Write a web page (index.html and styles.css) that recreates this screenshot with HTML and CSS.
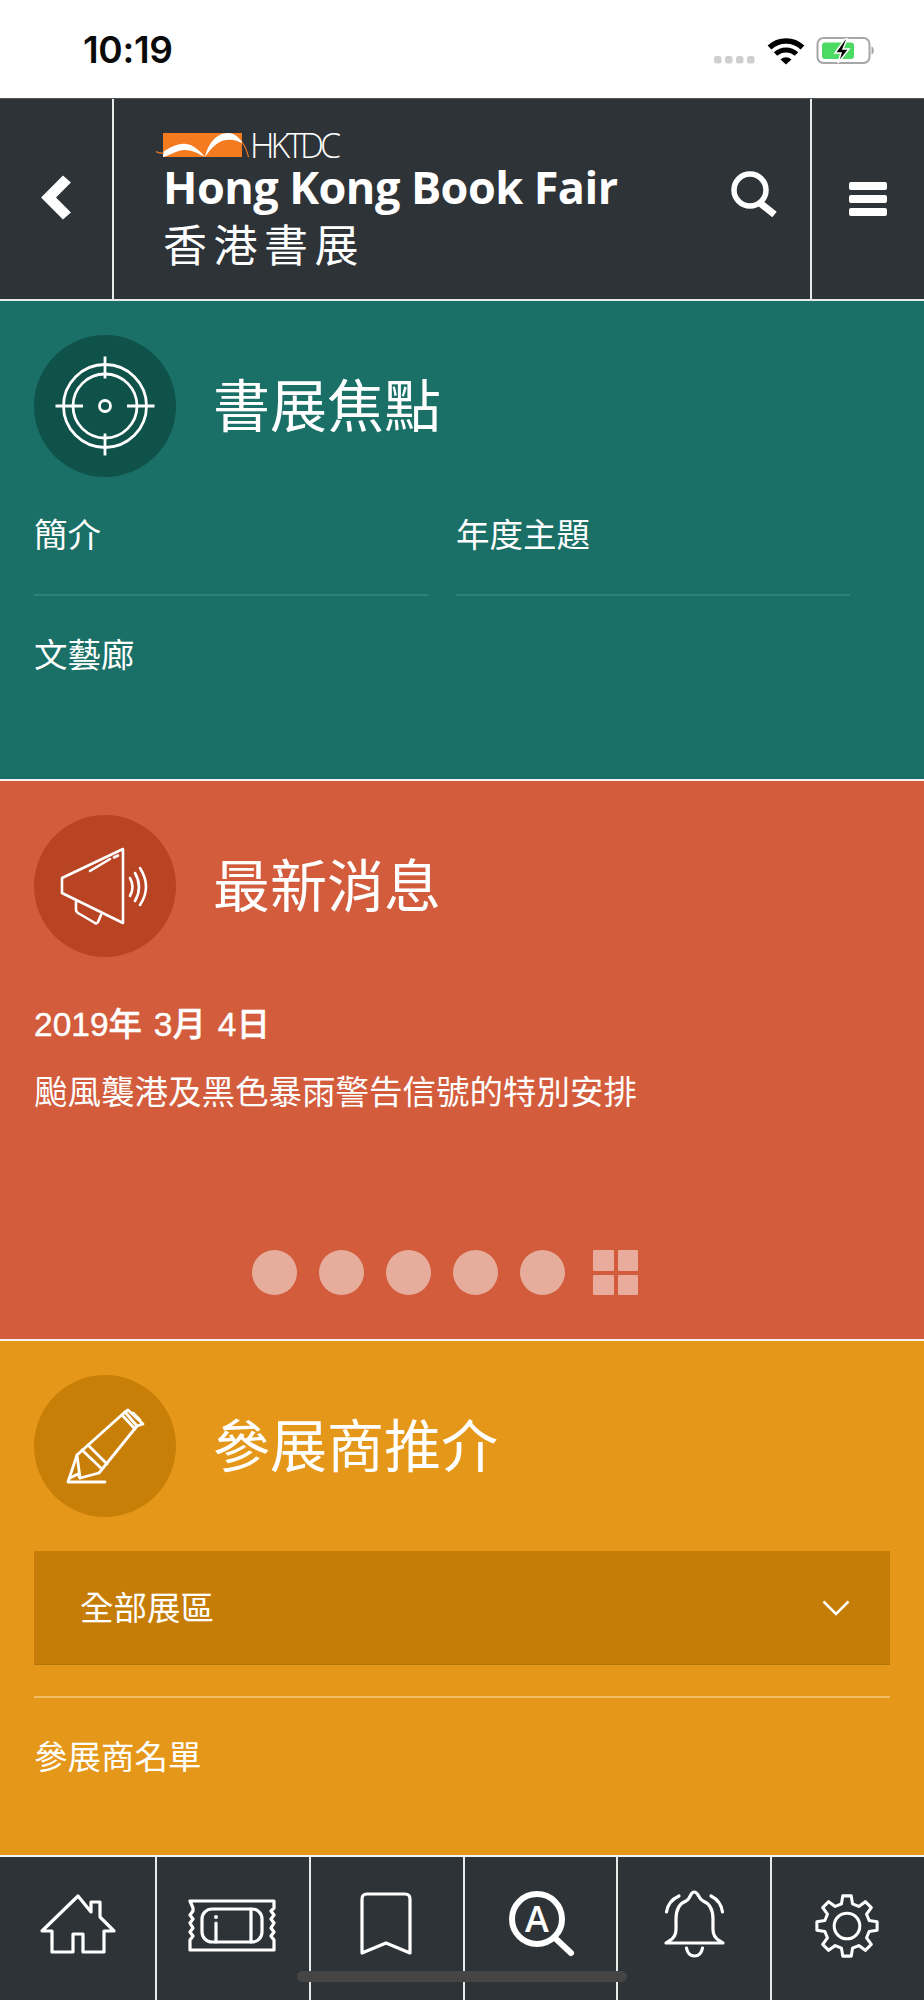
FILE: index.html
```html
<!DOCTYPE html>
<html lang="zh-Hant">
<head>
<meta charset="utf-8">
<title>香港書展</title>
<link rel="stylesheet" href="styles.css">
</head>
<body>
<div class="page">
  <div class="statusbar">
    <span class="time">10:19</span>
    <svg class="status-icons" viewBox="0 0 170 40" aria-hidden="true">
      <g fill="#cfcfcf"><rect x="2" y="19" width="7.5" height="7.5" rx="2.5"/><rect x="13" y="19" width="7.5" height="7.5" rx="2.5"/><rect x="24" y="19" width="7.5" height="7.5" rx="2.5"/><rect x="35" y="19" width="7.5" height="7.5" rx="2.5"/></g>
      <g fill="none" stroke="#000">
        <path d="M57.5 10.5 A24 24 0 0 1 90.5 10.5" stroke-width="5.5"/>
        <path d="M63.5 17 A15.5 15.5 0 0 1 84.5 17" stroke-width="5"/>
      </g>
      <path d="M68.5 22.5 A8 8 0 0 1 79.5 22.5 L74 27.5Z" fill="#000"/>
      <rect x="105.5" y="1" width="52" height="25" rx="6" fill="none" stroke="#a6a6a6" stroke-width="2"/>
      <path d="M159.5 9.5 C162.5 10 162.5 17 159.5 17.5Z" fill="#a6a6a6"/>
      <rect x="110" y="5.5" width="32" height="16.5" rx="3" fill="#4cd964"/>
      <path d="M133 2 L123 16 L129 16 L126 26 L137 12 L131 12 L135 2Z" fill="#000" stroke="#fff" stroke-width="1.5"/>
    </svg>
  </div>

  <header class="topbar">
    <div class="top-back">
      <svg class="fill-cell" viewBox="0 0 112 201" aria-hidden="true"><polygon points="41,99 63,77 71,84 56,99 71,114 63,121" fill="#fff"/></svg>
    </div>
    <div class="brand">
      <div class="brand-logo">
        <svg class="logo-mark" viewBox="0 0 94 30" aria-hidden="true">
          <rect x="7" y="3" width="79" height="24" fill="#f47b20"/>
          <path d="M7 22 C15 17 22 13 30 14 C38 15 44 21 49 27 C43 24 37 20 29 20 C21 20 15 25 7 27Z" fill="#fff"/>
          <path d="M49 27 C52 14 60 3 72 3 C78 3 84 8 86 12 L86 13 C80 10 76 9 70 10 C62 11 56 17 49 27Z" fill="#fff"/>
          <path d="M86 12 C89 16 91 21 92.500 27" stroke="#f47b20" stroke-width="1.200" fill="none"/>
          <path d="M0 21.500 C3 23 5 23.500 8 23" stroke="#f47b20" stroke-width="1.200" fill="none"/>
        </svg>
        <span class="logo-text">HKTDC</span>
      </div>
      <div class="brand-en">Hong Kong Book Fair</div>
      <div class="brand-zh">香港書展</div>
    </div>
    <div class="top-search">
      <svg class="search-icon" viewBox="0 0 50 50" aria-hidden="true"><circle cx="20" cy="20" r="16" fill="none" stroke="#fff" stroke-width="5.500"/><path d="M30 33 L44.500 44.500" stroke="#fff" stroke-width="7"/></svg>
    </div>
    <div class="top-menu">
      <span class="menu-bars"><i></i><i></i><i></i></span>
    </div>
  </header>

  <section class="panel panel-teal">
    <div class="panel-head">
      <div class="badge badge-teal">
        <svg class="fill-cell" viewBox="0 0 142 142" aria-hidden="true">
          <g fill="none" stroke="#fff" stroke-width="2.800">
            <circle cx="71" cy="71" r="41.500"/><circle cx="71" cy="71" r="32"/><circle cx="71" cy="71" r="5.500"/>
            <path d="M71 21.500V43.500M71 98.500V120.500M21.500 71H49M93 71H120.500"/>
          </g>
        </svg>
      </div>
      <h2 class="panel-title">書展焦點</h2>
    </div>
    <div class="link-grid">
      <a class="link-item link-rule">簡介</a>
      <a class="link-item link-rule">年度主題</a>
      <a class="link-item">文藝廊</a>
    </div>
  </section>

  <section class="panel panel-orange">
    <div class="panel-head">
      <div class="badge badge-orange">
        <svg class="fill-cell" viewBox="0 0 142 142" aria-hidden="true">
          <g fill="none" stroke="#fff" stroke-width="2.600" stroke-linejoin="round" stroke-linecap="round">
            <path d="M89 34 L28 63 L28 78 L89 108Z"/>
            <path d="M42 87V95Q42 97 44 98L61 108Q63 109 64 107L67 100"/>
            <path d="M56 56L76 44M80 42.500L84 40.500"/>
            <path d="M96 63 Q101 72 96 81"/>
            <path d="M101 58 Q109 72 101 86"/>
            <path d="M106 53 Q118 72 106 90"/>
          </g>
        </svg>
      </div>
      <h2 class="panel-title">最新消息</h2>
    </div>
    <div class="news-date">2019年 3月 4日</div>
    <div class="news-text">颱風襲港及黑色暴雨警告信號的特別安排</div>
    <div class="pager">
      <span class="pager-dot"></span><span class="pager-dot"></span><span class="pager-dot"></span><span class="pager-dot"></span><span class="pager-dot"></span>
      <span class="pager-grid"><i></i><i></i><i></i><i></i></span>
    </div>
  </section>

  <section class="panel panel-yellow">
    <div class="panel-head">
      <div class="badge badge-yellow">
        <svg class="fill-cell" viewBox="0 0 142 142" aria-hidden="true">
          <g fill="none" stroke="#fff" stroke-width="2.800" stroke-linejoin="round" stroke-linecap="round">
            <path d="M43 80L91 37L103 51L65 98L46 103Z"/>
            <path d="M48 75L68 94M54 70L73 89"/>
            <path d="M91 37L94 35L109 49L103 51M88 40L101 54"/>
            <path d="M99 38L106 45"/>
            <path d="M43 80L34 107H71"/>
            <path d="M36 103L44 99L46 103"/>
          </g>
        </svg>
      </div>
      <h2 class="panel-title">參展商推介</h2>
    </div>
    <div class="select">
      <span class="select-label">全部展區</span>
      <svg class="select-chevron" viewBox="0 0 28 16" aria-hidden="true"><path d="M1.500 1.500L14 14L26.500 1.500" fill="none" stroke="#fff" stroke-width="2.500"/></svg>
    </div>
    <a class="yellow-link">參展商名單</a>
  </section>

  <nav class="tabbar">
    <div class="tab">
      <svg viewBox="0 0 154 143" aria-hidden="true"><path d="M78 39L42 74H52V95H73V77H83V95H104V74H114L100 60V45H91V55Z" class="tab-line"/></svg>
    </div>
    <div class="tab">
      <svg viewBox="0 0 154 143" aria-hidden="true">
        <path d="M33 44H117V51L114 54L117 58L114 62L117 66L114 71L117 75L114 79L117 83V93H33V83L36 79L33 75L36 71L33 66L36 62L33 58L36 54V51Z" class="tab-line"/>
        <rect x="45" y="52" width="60" height="33" rx="10" class="tab-line"/>
        <path d="M59 66V85M94 52V85" class="tab-line"/>
        <circle cx="59" cy="60" r="2" fill="#fff"/>
      </svg>
    </div>
    <div class="tab">
      <svg viewBox="0 0 154 143" aria-hidden="true"><path d="M51 96V42Q51 37 56 37H94Q99 37 99 42V96L75 86Z" class="tab-line"/></svg>
    </div>
    <div class="tab">
      <svg viewBox="0 0 154 143" aria-hidden="true">
        <circle cx="72" cy="62" r="25" fill="none" stroke="#fff" stroke-width="6"/>
        <path d="M90 81L106 96" fill="none" stroke="#fff" stroke-width="6" stroke-linecap="round"/>
        <text x="72" y="75" class="tab-letter">A</text>
      </svg>
    </div>
    <div class="tab">
      <svg viewBox="0 0 154 143" aria-hidden="true">
        <path d="M76 35C72 35 73 42 68 44C60 47 58 54 58 62C58 72 59 78 54 82L48 86H105L99 82C94 78 95 72 95 62C95 54 93 47 85 44C80 42 81 35 76 35Z" class="tab-line"/>
        <path d="M68.500 91Q70 99 76.500 99Q83 99 84.500 91M61 39Q50 44 48.500 55M93 39Q103 44 104.500 55" class="tab-line"/>
      </svg>
    </div>
    <div class="tab">
      <svg viewBox="0 0 154 143" aria-hidden="true">
        <g transform="translate(75 69) scale(0.95)">
          <path d="M-5.800-23.300L-4.500-31.700H4.500L5.800-23.300L12.400-20.600L19.300-25.600L25.600-19.300L20.600-12.400L23.300-5.800L31.700-4.500V4.500L23.300 5.800L20.600 12.400L25.600 19.300L19.300 25.600L12.400 20.600L5.800 23.300L4.500 31.700H-4.500L-5.800 23.300L-12.400 20.600L-19.300 25.600L-25.600 19.300L-20.600 12.400L-23.300 5.800L-31.700 4.500V-4.500L-23.300-5.800L-20.600-12.400L-25.600-19.300L-19.300-25.600L-12.400-20.600Z" class="tab-line"/>
          <circle r="13.500" class="tab-line"/>
        </g>
      </svg>
    </div>
  </nav>
  <div class="home-indicator"></div>
</div>
</body>
</html>
```
FILE: styles.css
```css
* { box-sizing: border-box; }
html, body { margin: 0; padding: 0; background: #fff; }
.page {
  position: relative;
  width: 924px;
  height: 2000px;
  overflow: hidden;
  display: flex;
  flex-direction: column;
  font-family: "Noto Sans CJK TC", "Noto Sans", sans-serif;
  color: #fff;
}
.fill-cell { display: block; width: 100%; height: 100%; }

.statusbar {
  height: 98px;
  display: flex;
  justify-content: space-between;
  align-items: flex-start;
  background: #fff;
  padding: 28px 42px 0 83px;
  flex: none;
}
.time { font: 600 37px/44px Inter, "Liberation Sans", sans-serif; color: #0a0a0a; letter-spacing: -0.3px; }
.status-icons { width: 170px; height: 40px; margin-top: 9px; }

.topbar {
  height: 203px;
  flex: none;
  display: flex;
  background: #2e3338;
  border-top: 1px solid #50555a;
  border-bottom: 2px solid #e8eaea;
}
.top-back { width: 114px; border-right: 2px solid #e8eaea; flex: none; }
.brand { flex: 1; padding: 31px 0 0 49px; }
.brand-logo { display: flex; align-items: center; height: 30px; margin-left: -7px; }
.logo-mark { width: 94px; height: 30px; flex: none; }
.logo-text { font: 300 34px/30px "Open Sans", sans-serif; letter-spacing: -4px; color: #fff; }
.brand-en { font: 700 45px/50px "Open Sans", "Noto Sans", sans-serif; white-space: nowrap; letter-spacing: -0.55px; margin-top: 2px; }
.brand-zh { font-size: 44px; line-height: 44px; margin-top: 9px; letter-spacing: 6.500px; font-weight: 400; }
.top-search { width: 80px; flex: none; display: flex; align-items: flex-start; padding-top: 71px; }
.search-icon { width: 50px; height: 50px; }
.top-menu {
  width: 114px;
  flex: none;
  border-left: 2px solid #e8eaea;
  display: flex;
  justify-content: center;
  padding-top: 83px;
}
.menu-bars { display: flex; flex-direction: column; gap: 5px; width: 38px; }
.menu-bars i { display: block; height: 8px; background: #fff; border-radius: 2px; }

.panel { flex: none; padding: 34px 34px 0; border-bottom: 2px solid #f2f2f2; }
.panel-teal { height: 480px; background: #1a6f66; }
.panel-orange { height: 560px; background: #d25c3c; }
.panel-yellow { height: 516px; background: #e59719; }
.panel-head { display: flex; align-items: center; gap: 37px; }
.badge { width: 142px; height: 142px; border-radius: 50%; flex: none; }
.badge-teal { background: #0e5249; }
.badge-orange { background: #b94424; }
.badge-yellow { background: #c87f08; }
.panel-title { margin: 0 0 8px; font-size: 57px; line-height: 80px; font-weight: 400; }

.link-grid {
  margin-top: 28px;
  display: grid;
  grid-template-columns: 394px 394px;
  column-gap: 28px;
  row-gap: 29px;
}
.link-item { font-size: 33.500px; line-height: 56px; font-weight: 400; }
.link-rule { height: 91px; border-bottom: 2px solid #2c8276; }

.news-date {
  margin-top: 48px;
  font: 500 33.500px/40px "Liberation Sans", "Noto Sans CJK TC", sans-serif;
  word-spacing: 2.500px;
  -webkit-text-stroke: 0.4px #fff;
}
.news-text { margin-top: 23px; font-size: 33.500px; line-height: 44px; font-weight: 400; white-space: nowrap; }
.pager { margin-top: 138px; padding-left: 218px; display: flex; gap: 22px; }
.pager-dot { width: 45px; height: 45px; border-radius: 50%; background: #e7ad9c; }
.pager-grid {
  margin-left: 6px;
  width: 45px;
  height: 45px;
  display: grid;
  grid-template-columns: 1fr 1fr;
  gap: 4px;
}
.pager-grid i { display: block; background: #e9ab9b; border-radius: 1px; }

.select {
  margin-top: 34px;
  height: 114px;
  background: #c67d07;
  border-bottom: 1px solid #b47410;
  display: flex;
  justify-content: space-between;
  align-items: center;
  padding: 0 40px 0 46px;
  font-size: 33.500px;
  font-weight: 400;
}
.select-label { margin-bottom: 4px; }
.select-chevron { width: 28px; height: 16px; }
.yellow-link {
  display: block;
  margin-top: 31px;
  padding-top: 29px;
  border-top: 2px solid #f0bd66;
  font-size: 33.500px;
  line-height: 56px;
  font-weight: 400;
}

.tabbar {
  flex: none;
  height: 143px;
  display: grid;
  grid-template-columns: 155px repeat(5, minmax(0, 1fr));
  background: #2e3338;
}
.tab { border-left: 2px solid #e8eaea; min-width: 0; }
.tab:first-child { border-left: 0; }
.tab svg { display: block; width: 154px; height: 143px; }
.tab-line { fill: none; stroke: #fff; stroke-width: 3.200; stroke-linejoin: round; stroke-linecap: round; }
.tab-letter { font: 600 36px "Open Sans", sans-serif; fill: #fff; text-anchor: middle; }

.home-indicator {
  position: absolute;
  left: 297px;
  top: 1971px;
  width: 330px;
  height: 11px;
  border-radius: 6px;
  background: #454545;
}
```
